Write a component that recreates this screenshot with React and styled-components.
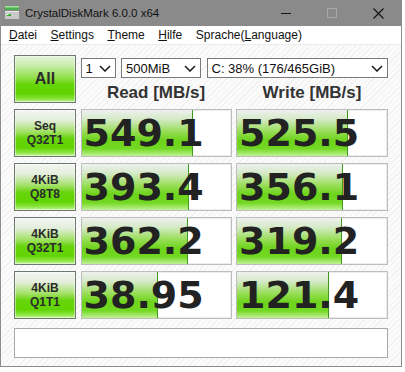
import React from 'react'
import styled, { createGlobalStyle } from 'styled-components'

const GlobalStyle = createGlobalStyle`
  body {
    margin: 0;
    background: #fff;
    font-family: "Liberation Sans", Arial, sans-serif;
  }
`

const Window = styled.div`
  width: 402px;
  height: 367px;
  box-sizing: border-box;
  border: 1px solid #8d8d8d;
  border-top: none;
  display: flex;
  flex-direction: column;
`

const TitleBar = styled.div`
  height: 26px;
  background: #8a8a8a;
  display: flex;
  align-items: center;
  padding-left: 3px;
  color: #111;
  font-size: 11.5px;
`

const TitleText = styled.div`
  margin-left: 5px;
  flex: 1;
`

const WinButton = styled.div`
  width: 46px;
  height: 26px;
  display: flex;
  align-items: center;
  justify-content: center;
`

const MenuBar = styled.div`
  height: 18px;
  background: #fff;
  border-bottom: 1px solid #ececec;
  display: flex;
  align-items: center;
  padding-left: 8px;
  gap: 13.5px;
  font-size: 12px;
  color: #111;
`

const MenuItem = styled.span`
  u { text-decoration: underline; }
`

const Content = styled.div`
  flex: 1;
  padding: 10px 0 0 13px;
  background: repeating-linear-gradient(135deg, #fbfbfb 0px, #fbfbfb 3px, #f1f1f1 3px, #f1f1f1 4px);
`

const Grid = styled.div`
  display: grid;
  grid-template-columns: 62px 151px 152px;
  grid-auto-rows: 48px;
  column-gap: 4.5px;
  row-gap: 6px;
`

const GreenButton = styled.div`
  box-sizing: border-box;
  border: 1px solid #6e786e;
  box-shadow: inset 0 0 0 1px rgba(255, 255, 255, 0.45);
  background: ${p => p.$all
    ? 'linear-gradient(to bottom, #e6f3dc 0%, #cdeeb4 18%, #97e154 45%, #64d506 62%, #60d300 82%, #86e43a 93%, #bff38f 100%)'
    : 'linear-gradient(to bottom, #f4f5f3 0%, #e3eedb 22%, #a6e26c 46%, #66d50a 62%, #62d402 82%, #8ee645 93%, #c8f59e 100%)'};
  display: flex;
  align-items: center;
  justify-content: center;
  text-align: center;
  font-weight: bold;
  color: #2b2b2b;
  font-size: ${p => (p.$all ? '16px' : '12px')};
  line-height: 14px;
  white-space: pre-line;
`

const TopArea = styled.div`
  grid-column: 2 / 4;
  display: flex;
  flex-direction: column;
`

const SelectRow = styled.div`
  display: flex;
  gap: 5.5px;
  margin-top: 3px;
`

const Select = styled.div`
  box-sizing: border-box;
  height: 20px;
  width: ${p => (p.$width ? `${p.$width}px` : 'auto')};
  flex: ${p => (p.$width ? 'none' : 1)};
  border: 1px solid #7a7a7a;
  background: #fff;
  display: flex;
  align-items: center;
  justify-content: space-between;
  padding: 0 4px 0 4px;
  font-size: 13px;
  color: #111;
`

const HeaderRow = styled.div`
  display: grid;
  grid-template-columns: 151px 152px;
  column-gap: 4.5px;
  margin-top: 5px;
`

const HeaderText = styled.div`
  text-align: center;
  font-weight: bold;
  font-size: 17px;
  line-height: 20px;
  color: #333;
`

const ResultCell = styled.div`
  position: relative;
  box-sizing: border-box;
  border: 1px solid #bdbdbd;
  box-shadow: inset 0 0 0 1px #ececec;
  background: #fff;
  display: flex;
  align-items: center;
  overflow: hidden;
`

const Bar = styled.div`
  position: absolute;
  left: 0;
  top: 0;
  bottom: 0;
  box-sizing: border-box;
  border-right: 1px solid #3f9a20;
  background: linear-gradient(to bottom, #eef0ee 0%, #d5eac8 20%, #95dd52 48%, #6dd31b 66%, #72d822 84%, #c2f296 100%);
`

const Score = styled.div`
  position: relative;
  padding-left: 2px;
  font-family: "DejaVu Sans", sans-serif;
  font-weight: bold;
  font-size: 38px;
  line-height: 1;
  color: #222;
`

const Comment = styled.div`
  box-sizing: border-box;
  margin-top: 9px;
  width: 374px;
  height: 30px;
  border: 1px solid #a9a9a9;
  background: #fff;
`

const Chevron = () => (
  <svg width="12" height="7" viewBox="0 0 12 7">
    <polyline points="1,1 6,6 11,1" fill="none" stroke="#222" strokeWidth="1.6" />
  </svg>
)

const AppIcon = () => (
  <svg width="16" height="14" viewBox="0 0 16 14">
    <rect x="1" y="0" width="14" height="4" fill="#4caf50" />
    <rect x="1" y="0" width="14" height="1.5" fill="#9fe39a" />
    <rect x="1" y="5" width="14" height="8" fill="#c9c9c9" />
    <rect x="1" y="5" width="14" height="1" fill="#e8e8e8" />
    <rect x="3" y="8" width="4" height="2" fill="#2faa2f" />
    <rect x="3" y="8" width="1.5" height="1" fill="#e8ffe8" />
  </svg>
)

const rows = [
  { label: 'Seq\nQ32T1', read: '549.1', write: '525.5' },
  { label: '4KiB\nQ8T8', read: '393.4', write: '356.1' },
  { label: '4KiB\nQ32T1', read: '362.2', write: '319.2' },
  { label: '4KiB\nQ1T1', read: '38.95', write: '121.4' },
]

const barWidth = v => 30.4 * (Math.log10(parseFloat(v)) + 0.94)

const Result = ({ value }) => (
  <ResultCell>
    <Bar style={{ width: `${barWidth(value)}px` }} />
    <Score>{value}</Score>
  </ResultCell>
)

const App = () => (
  <>
    <GlobalStyle />
    <Window>
      <TitleBar>
        <AppIcon />
        <TitleText>CrystalDiskMark 6.0.0 x64</TitleText>
        <WinButton>
          <svg width="10" height="10" viewBox="0 0 10 10">
            <line x1="0" y1="5.5" x2="10" y2="5.5" stroke="#1a1a1a" strokeWidth="1" />
          </svg>
        </WinButton>
        <WinButton>
          <svg width="10" height="10" viewBox="0 0 10 10">
            <rect x="0.5" y="0.5" width="9" height="9" fill="none" stroke="#a8a8a8" strokeWidth="1" />
          </svg>
        </WinButton>
        <WinButton>
          <svg width="11" height="11" viewBox="0 0 11 11">
            <path d="M0.5 0.5 L10.5 10.5 M10.5 0.5 L0.5 10.5" stroke="#111" strokeWidth="1.1" />
          </svg>
        </WinButton>
      </TitleBar>
      <MenuBar>
        <MenuItem><u>D</u>atei</MenuItem>
        <MenuItem><u>S</u>ettings</MenuItem>
        <MenuItem><u>T</u>heme</MenuItem>
        <MenuItem><u>H</u>ilfe</MenuItem>
        <MenuItem>Sprache(<u>L</u>anguage)</MenuItem>
      </MenuBar>
      <Content>
        <Grid>
          <GreenButton $all>All</GreenButton>
          <TopArea>
            <SelectRow>
              <Select $width={35}>1<Chevron /></Select>
              <Select $width={80}>500MiB<Chevron /></Select>
              <Select>C: 38% (176/465GiB)<Chevron /></Select>
            </SelectRow>
            <HeaderRow>
              <HeaderText>Read [MB/s]</HeaderText>
              <HeaderText>Write [MB/s]</HeaderText>
            </HeaderRow>
          </TopArea>
          {rows.map(r => (
            <React.Fragment key={r.label}>
              <GreenButton>{r.label}</GreenButton>
              <Result value={r.read} />
              <Result value={r.write} />
            </React.Fragment>
          ))}
        </Grid>
        <Comment />
      </Content>
    </Window>
  </>
)

export default App
